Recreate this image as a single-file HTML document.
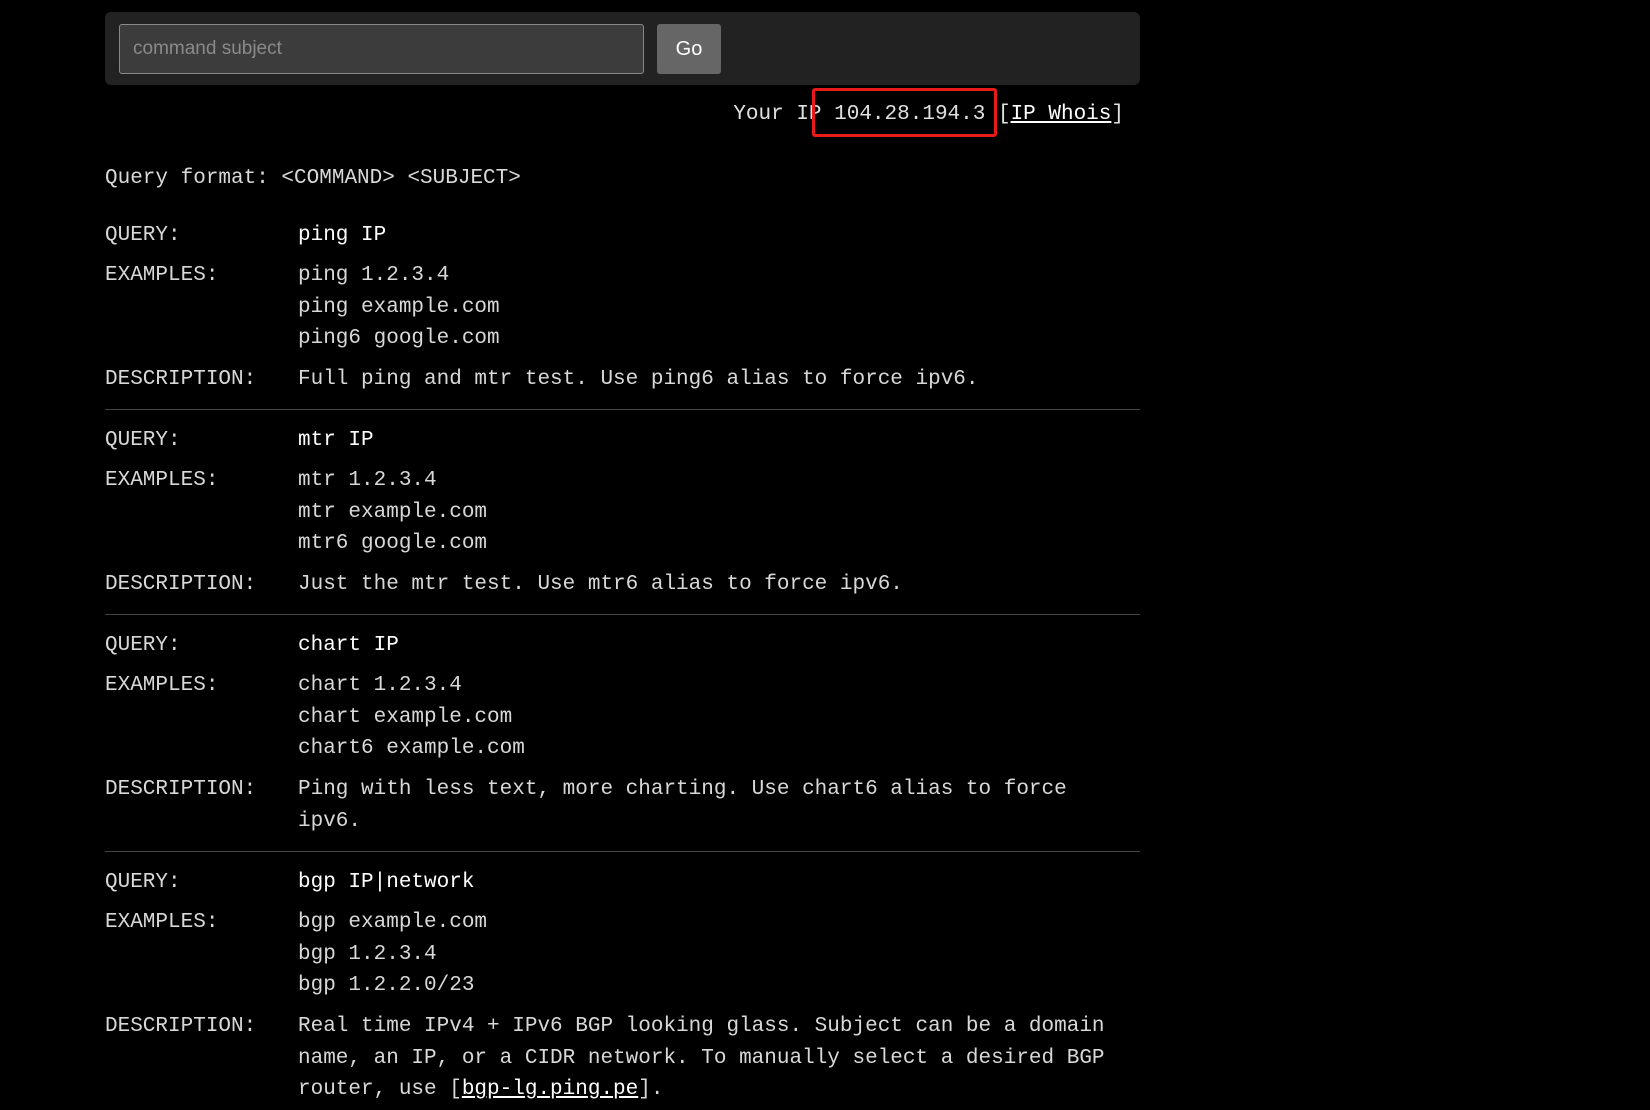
<!DOCTYPE html>
<html><head><meta charset="utf-8"><style>
body{margin:0;background:#000;width:1650px;height:1110px;overflow:hidden;font-family:"Liberation Mono",monospace;font-size:21px;color:#d8d8d8}
.bar{position:absolute;left:105px;top:12px;width:1035px;height:73px;background:#222;border-radius:6px}
.inp{position:absolute;left:14px;top:12px;width:525px;height:50px;box-sizing:border-box;background:#3c3c3c;border:1px solid #888;border-radius:3px;font-family:"Liberation Sans",sans-serif;font-size:19px;color:#8a8a8a;line-height:48px;padding-left:13px}
.go{position:absolute;left:552px;top:12px;width:64px;height:50px;background:#666;border-radius:3px;color:#fff;font-family:"Liberation Sans",sans-serif;font-size:20px;text-align:center;line-height:50px}
.ip{position:absolute;right:526px;top:99px;line-height:32px;white-space:pre;color:#e0e0e0}
.red{position:absolute;left:812px;top:88px;width:185px;height:49px;box-sizing:border-box;border:3px solid #e81a1a;border-radius:3px}
a{color:#fff;text-decoration:underline}
.fmt{position:absolute;left:105px;top:163px;line-height:32px}
.main{position:absolute;left:105px;top:220px;width:1035px}
.row{display:flex;line-height:31.6px}
.l{width:193px;flex:none}
.v{flex:1;white-space:pre}
.q .v{color:#fff}
.q{margin-bottom:8.4px}
.d{margin-top:9.4px}
hr{border:0;border-top:1px solid #444;margin:13.4px 0 15px 0}
</style></head><body>
<div class="bar"><div class="inp">command subject</div><div class="go">Go</div></div>
<div class="ip">Your IP 104.28.194.3 [<a>IP Whois</a>]</div>
<div class="red"></div>
<div class="fmt">Query format: &lt;COMMAND&gt; &lt;SUBJECT&gt;</div>
<div class="main">
<div class="row q"><div class="l">QUERY:</div><div class="v">ping IP</div></div>
<div class="row"><div class="l">EXAMPLES:</div><div class="v">ping 1.2.3.4
ping example.com
ping6 google.com</div></div>
<div class="row d"><div class="l">DESCRIPTION:</div><div class="v">Full ping and mtr test. Use ping6 alias to force ipv6.</div></div>
<hr>
<div class="row q"><div class="l">QUERY:</div><div class="v">mtr IP</div></div>
<div class="row"><div class="l">EXAMPLES:</div><div class="v">mtr 1.2.3.4
mtr example.com
mtr6 google.com</div></div>
<div class="row d"><div class="l">DESCRIPTION:</div><div class="v">Just the mtr test. Use mtr6 alias to force ipv6.</div></div>
<hr>
<div class="row q"><div class="l">QUERY:</div><div class="v">chart IP</div></div>
<div class="row"><div class="l">EXAMPLES:</div><div class="v">chart 1.2.3.4
chart example.com
chart6 example.com</div></div>
<div class="row d"><div class="l">DESCRIPTION:</div><div class="v">Ping with less text, more charting. Use chart6 alias to force
ipv6.</div></div>
<hr>
<div class="row q"><div class="l">QUERY:</div><div class="v">bgp IP|network</div></div>
<div class="row"><div class="l">EXAMPLES:</div><div class="v">bgp example.com
bgp 1.2.3.4
bgp 1.2.2.0/23</div></div>
<div class="row d"><div class="l">DESCRIPTION:</div><div class="v">Real time IPv4 + IPv6 BGP looking glass. Subject can be a domain
name, an IP, or a CIDR network. To manually select a desired BGP
router, use [<a>bgp-lg.ping.pe</a>].</div></div>
</div>
</body></html>
